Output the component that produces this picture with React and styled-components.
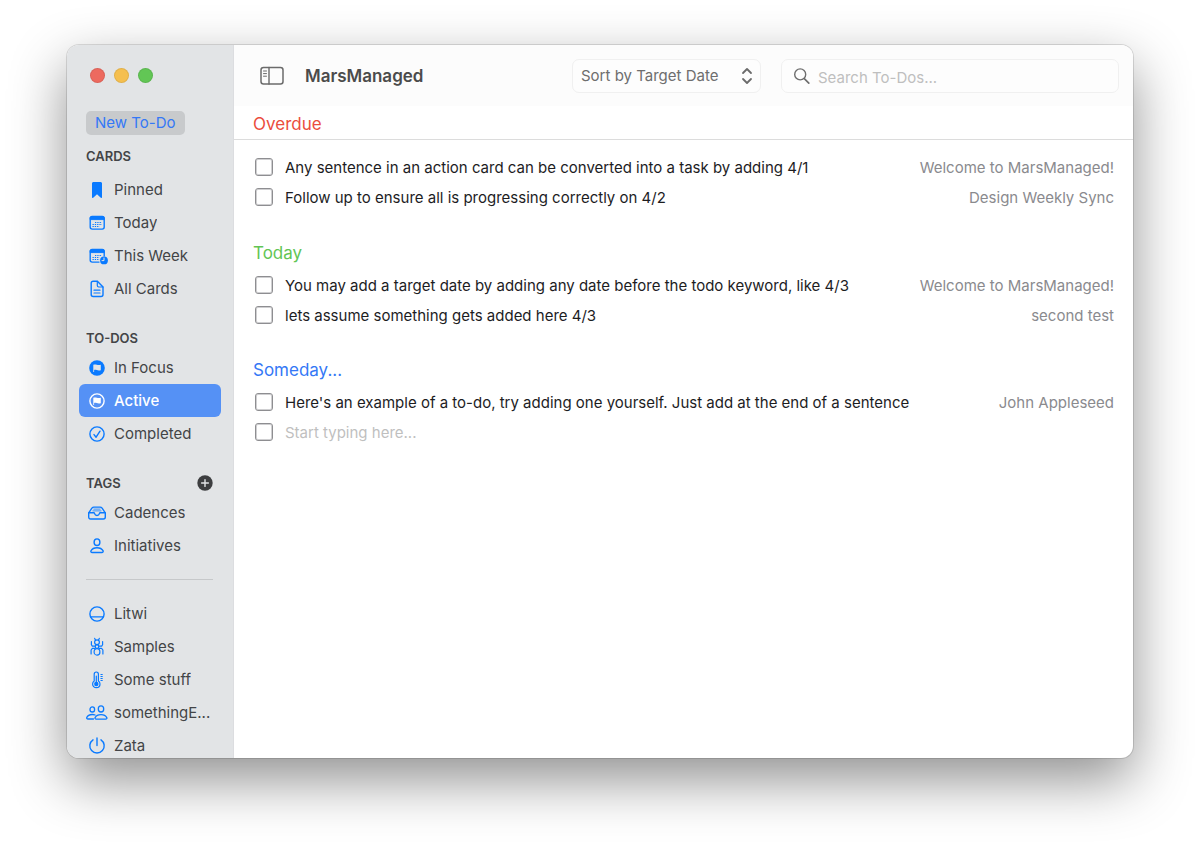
import React, { useState } from 'react';
import styled, { createGlobalStyle, css } from 'styled-components';

const GlobalStyle = createGlobalStyle`
  * {
    box-sizing: border-box;
  }
  body {
    margin: 0;
    background: #fff;
    font-family: Inter, 'Liberation Sans', sans-serif;
    font-size: 15px;
    color: #1d1d1f;
  }
  button, input, select {
    font: inherit;
    color: inherit;
  }
  ul {
    list-style: none;
    margin: 0;
    padding: 0;
  }
`;

const Desktop = styled.div`
  height: 100vh;
  padding: 45px 67px 88px;
  overflow: hidden;
`;

const Window = styled.div`
  display: grid;
  grid-template-columns: 167px 1fr;
  height: 100%;
  overflow: hidden;
  border-radius: 12px;
  background: #fff;
  box-shadow: 0 0 0 1px rgba(0, 0, 0, 0.12), 0 22px 56px rgba(0, 0, 0, 0.44);
`;

const Sidebar = styled.aside`
  padding: 23px 12px 0;
  overflow: hidden;
  background: #e2e4e6;
  border-right: 1px solid #dcdde0;
`;

const TrafficLights = styled.div`
  display: flex;
  gap: 9px;
  padding-left: 11px;
`;

const Light = styled.button`
  width: 15px;
  height: 15px;
  padding: 0;
  border: 1px solid rgba(0, 0, 0, 0.08);
  border-radius: 50%;
  background: ${({ $color }) => $color};
`;

const NewButton = styled.button`
  display: block;
  height: 24px;
  margin: 28px 0 11px 7px;
  padding: 0 9px;
  border: 0;
  border-radius: 5px;
  background: #c8cacc;
  color: #3478f6;
  line-height: 24px;
`;

const SectionHeader = styled.div`
  display: flex;
  align-items: center;
  justify-content: space-between;
  height: 20px;
  margin-bottom: ${({ $loose }) => ($loose ? '7px' : '3px')};
  padding: 0 8px 0 7px;
`;

const SectionTitle = styled.h2`
  margin: 0;
  font-size: 13px;
  font-weight: 600;
  color: #434447;
`;

const AddButton = styled.button`
  display: flex;
  padding: 0;
  border: 0;
  background: none;
`;

const NavList = styled.ul`
  margin-bottom: 23px;
`;

const NavItem = styled.button`
  display: flex;
  align-items: center;
  gap: 6px;
  width: 100%;
  height: 33px;
  padding: 0 8px 0 7px;
  border: 0;
  border-radius: 6px;
  background: none;
  color: #434447;
  text-align: left;

  svg {
    flex: none;
    color: #0a7aff;
  }

  ${({ $active }) =>
    $active &&
    css`
      background: #5591f5;
      color: #fff;
      font-weight: 500;

      svg {
        color: #fff;
      }
    `}
`;

const NavLabel = styled.span`
  overflow: hidden;
  white-space: nowrap;
  text-overflow: ellipsis;
`;

const Divider = styled.hr`
  height: 1px;
  margin: -6px 8px 17px 7px;
  border: 0;
  background: #c6c8ca;
`;

const Main = styled.main`
  display: flex;
  flex-direction: column;
  min-width: 0;
`;

const Toolbar = styled.header`
  display: flex;
  align-items: center;
  gap: 20px;
  height: 61px;
  padding: 0 14px 0 26px;
  background: #fcfcfc;
`;

const ToggleButton = styled.button`
  display: flex;
  padding: 0;
  border: 0;
  background: none;
  color: #6b6b6b;
`;

const AppTitle = styled.h1`
  flex: 1;
  margin: 0;
  font-size: 17px;
  font-weight: 600;
  color: #4b4b4b;
`;

const SortBox = styled.label`
  display: grid;
  align-items: center;
  width: 189px;

  > * {
    grid-area: 1 / 1;
  }
  svg {
    justify-self: end;
    margin-right: 8px;
    pointer-events: none;
  }
`;

const SortSelect = styled.select`
  width: 100%;
  height: 34px;
  padding: 0 30px 0 8px;
  appearance: none;
  border: 1px solid #f0f0f0;
  border-radius: 7px;
  background: #fdfdfd;
  color: #6e6e6e;
`;

const SearchBox = styled.label`
  display: flex;
  align-items: center;
  gap: 8px;
  width: 338px;
  height: 34px;
  padding: 3px 11px 0;
  border: 1px solid #f0f0f0;
  border-radius: 7px;
  background: #fdfdfd;
`;

const PlainInput = styled.input`
  flex: 1;
  min-width: 0;
  padding: 0;
  border: 0;
  outline: 0;
  background: none;

  &::placeholder {
    color: #bfbfbf;
    opacity: 1;
  }
`;

const GroupTitle = styled.h2`
  margin: 0;
  padding: 0 19px;
  font-size: 17px;
  font-weight: 400;
  line-height: 24px;
  color: ${({ $color }) => $color};
`;

const PinnedHeader = styled.div`
  height: 34px;
  padding-top: 6px;
  border-bottom: 1px solid #dcdcdc;
`;

const TodoList = styled.ul`
  margin: ${({ $first }) => ($first ? '12px 0 29px' : '5px 0 28px')};
`;

const TodoRow = styled.li`
  display: flex;
  align-items: center;
  gap: 12px;
  height: 30px;
  padding: 0 19px 0 21px;
`;

const TodoText = styled.label`
  flex: 1;
  min-width: 0;
  overflow: hidden;
  white-space: nowrap;
  text-overflow: ellipsis;
`;

const Source = styled.span`
  color: #8a8a8e;
`;

const Checkbox = styled.input.attrs({ type: 'checkbox' })`
  flex: none;
  width: 18px;
  height: 18px;
  margin: 0;
  appearance: none;
  border: 1px solid #8e8e91;
  border-radius: 3px;
  box-shadow: inset 0 0 0 1px #cfcfd1;

  &:checked {
    background: #3478f6;
  }
`;

const Icon = ({ children, width = 22, height = 22 }) => (
  <svg
    width={width}
    height={height}
    viewBox={`0 0 ${width} ${height}`}
    fill="none"
    stroke="currentColor"
    strokeWidth="1.4"
    strokeLinecap="round"
    strokeLinejoin="round"
    aria-hidden="true"
  >
    {children}
  </svg>
);

const icons = {
  pinned: (
    <path
      d="M6 4.6C6 3.7 6.6 3 7.6 3h6.8c1 0 1.6.7 1.6 1.6v13.6c0 .8-.6 1-1.2.5L11 15.2l-3.8 3.5c-.6.5-1.2.3-1.2-.5z"
      fill="currentColor"
      stroke="none"
    />
  ),
  today: (
    <>
      <rect x="4.2" y="4.5" width="14" height="12.6" rx="2" />
      <path d="M4.2 7.2v-1c0-1 .7-1.7 1.7-1.7h10.6c1 0 1.7.7 1.7 1.7v1z" fill="currentColor" strokeWidth="1" />
      <path d="M9 10.5h7M6.5 12.5h9.5M6.5 14.5h7" strokeWidth="1" strokeLinecap="butt" strokeDasharray="1.3 1" />
    </>
  ),
  week: (
    <>
      <path d="M13 17.1H6.2c-1.3 0-2-.7-2-2V6.5c0-1.3.7-2 2-2h10c1.3 0 2 .7 2 2v4.6" />
      <path d="M4.2 7.2v-1c0-1 .7-1.7 1.7-1.7h10.6c1 0 1.7.7 1.7 1.7v1z" fill="currentColor" strokeWidth="1" />
      <path d="M9 10.5h7M6.5 12.5h7M6.500 14.500h7" strokeWidth="1" strokeLinecap="butt" strokeDasharray="1.3 1" />
      <circle cx="18" cy="15.4" r="3.9" fill="currentColor" stroke="none" />
      <path d="M18 13v2.6h-2" stroke="#e2e4e6" strokeWidth="1" />
    </>
  ),
  document: (
    <>
      <path d="M5.2 5.2c0-1.3.7-2 2-2h4.2l5.6 5.7v7.6c0 1.3-.7 2-2 2H7.2c-1.3 0-2-.7-2-2z" />
      <path d="M11.3 3.4v4.2c0 .9.5 1.4 1.4 1.4H17M8 12.2h6M8 15h6" strokeWidth="1.2" />
    </>
  ),
  focus: (
    <>
      <circle cx="11" cy="11" r="7.8" fill="currentColor" stroke="none" />
      <path d="M7.3 15V7.8c2.4-1.2 4 .9 7.5 0v5.4c-3.5.9-5-1-6.7-.1V15z" fill="#e2e4e6" stroke="none" />
    </>
  ),
  active: (
    <>
      <circle cx="11" cy="11" r="7.1" />
      <path d="M7.3 15V7.8c2.4-1.2 4 .9 7.5 0v5.4c-3.5.9-5-1-6.7-.1V15z" fill="currentColor" stroke="none" />
    </>
  ),
  completed: (
    <>
      <circle cx="11" cy="11" r="7.1" />
      <path d="M8 11.6l2.1 2.6 3.9-6" />
    </>
  ),
  tray: (
    <>
      <path d="M2.7 10.8L5.9 6.2c.6-.8 1.1-1.1 2-1.1h6.2c.9 0 1.4.3 2 1.1l3.2 4.6v4.3c0 1.2-.7 1.9-1.9 1.9H4.6c-1.2 0-1.9-.7-1.9-1.9z" />
      <path d="M2.9 10.7h4.7c.6 0 .9.4 1 .9.3 1.1 1.2 1.9 2.4 1.9s2.1-.8 2.4-1.9c.1-.5.4-.9 1-.9h4.7" />
      <path d="M7.8 7.1h6.4M6.9 8.9h8.2" strokeWidth="0.8" />
    </>
  ),
  person: (
    <>
      <ellipse cx="11" cy="7.2" rx="2.9" ry="3.3" />
      <path d="M6.2 17.5c-1.2 0-1.7-.8-1.2-1.8 1-1.9 3.2-3 6-3s5 1.1 6 3c.5 1 0 1.8-1.2 1.8z" />
    </>
  ),
  horizon: (
    <>
      <circle cx="11" cy="11" r="7.1" />
      <path d="M4.8 13.9h12.4" />
    </>
  ),
  ant: (
    <g strokeWidth="1.2">
      <circle cx="11" cy="6.3" r="2.4" />
      <circle cx="11" cy="10.6" r="1.8" />
      <ellipse cx="11" cy="15.9" rx="2.9" ry="3.2" />
      <path d="M9.6 4.3L8.7 2.4M12.4 4.3l.9-1.9M9.2 10.1H6.3L5.4 8.700V5.600M12.800 10.100h2.900l.9-1.400V5.600M9 12.300H6.400L5.100 14v4M13 12.300h2.600l1.300 1.700v4" />
    </g>
  ),
  thermometer: (
    <>
      <path
        d="M8.2 12V5.2c0-1.3.9-2.2 2.1-2.2s2.1.9 2.1 2.2V12c1 .7 1.6 1.8 1.6 3 0 2.1-1.6 3.7-3.7 3.700S6.600 17.100 6.600 15c0-1.200.6-2.300 1.600-3z"
        strokeWidth="1.2"
      />
      <circle cx="10.3" cy="15" r="2.2" fill="currentColor" stroke="none" />
      <path d="M10.3 7v8" strokeWidth="1.2" />
      <path d="M14.5 5.5h2.2M14.5 7.5h2.2M14.5 9.5h2.2M14.5 11.5h2.2" strokeWidth="1" strokeLinecap="butt" />
    </>
  ),
  people: (
    <g strokeWidth="1.3">
      <ellipse cx="6.3" cy="7.4" rx="2.3" ry="2.6" />
      <ellipse cx="15" cy="6.9" rx="2.7" ry="3.1" />
      <path d="M7.5 17H2c-1 0-1.500-.6-1.200-1.400.7-2 2.800-3.100 5.500-3.100 1.100 0 2 .2 2.800.5" />
      <path d="M10.3 17.2c-1.100 0-1.600-.7-1.200-1.600.9-1.900 3-3 5.900-3 2.800 0 4.900 1.100 5.800 3 .4.9-.1 1.600-1.200 1.600z" />
    </g>
  ),
  power: <path d="M11 3v7.5M7 4.8a7.2 7.2 0 1 0 8 0" />,
};

const cardItems = [
  { label: 'Pinned', icon: 'pinned' },
  { label: 'Today', icon: 'today' },
  { label: 'This Week', icon: 'week' },
  { label: 'All Cards', icon: 'document' },
];

const todoItems = [
  { label: 'In Focus', icon: 'focus' },
  { label: 'Active', icon: 'active' },
  { label: 'Completed', icon: 'completed' },
];

const tagItems = [
  { label: 'Cadences', icon: 'tray' },
  { label: 'Initiatives', icon: 'person' },
];

const otherTags = [
  { label: 'Litwi', icon: 'horizon' },
  { label: 'Samples', icon: 'ant' },
  { label: 'Some stuff', icon: 'thermometer' },
  { label: 'somethingE...', icon: 'people' },
  { label: 'Zata', icon: 'power' },
];

const overdue = [
  {
    id: 'o1',
    text: 'Any sentence in an action card can be converted into a task by adding 4/1',
    source: 'Welcome to MarsManaged!',
  },
  { id: 'o2', text: 'Follow up to ensure all is progressing correctly on 4/2', source: 'Design Weekly Sync' },
];

const today = [
  {
    id: 't1',
    text: 'You may add a target date by adding any date before the todo keyword, like 4/3',
    source: 'Welcome to MarsManaged!',
  },
  { id: 't2', text: 'lets assume something gets added here 4/3', source: 'second test' },
];

const someday = [
  {
    id: 's1',
    text: "Here's an example of a to-do, try adding one yourself. Just add at the end of a sentence",
    source: 'John Appleseed',
  },
];

const Nav = ({ items, selected, onSelect }) => (
  <NavList>
    {items.map(({ label, icon }) => (
      <li key={label}>
        <NavItem type="button" $active={label === selected} onClick={() => onSelect(label)}>
          <Icon>{icons[icon]}</Icon>
          <NavLabel>{label}</NavLabel>
        </NavItem>
      </li>
    ))}
  </NavList>
);

const Todo = ({ id, text, source }) => (
  <TodoRow>
    <Checkbox id={id} />
    <TodoText htmlFor={id}>{text}</TodoText>
    <Source>{source}</Source>
  </TodoRow>
);

const App = () => {
  const [selected, setSelected] = useState('Active');

  return (
    <Desktop>
      <GlobalStyle />
      <Window>
        <Sidebar>
          <TrafficLights>
            <Light type="button" aria-label="Close" $color="#ed6a5f" />
            <Light type="button" aria-label="Minimize" $color="#f5bf4f" />
            <Light type="button" aria-label="Zoom" $color="#62c655" />
          </TrafficLights>
          <NewButton type="button">New To-Do</NewButton>
          <SectionHeader $loose>
            <SectionTitle>CARDS</SectionTitle>
          </SectionHeader>
          <Nav items={cardItems} selected={selected} onSelect={setSelected} />
          <SectionHeader>
            <SectionTitle>TO-DOS</SectionTitle>
          </SectionHeader>
          <Nav items={todoItems} selected={selected} onSelect={setSelected} />
          <SectionHeader>
            <SectionTitle>TAGS</SectionTitle>
            <AddButton type="button" aria-label="Add tag">
              <Icon width={16} height={16}>
                <circle cx="8" cy="8" r="7.7" fill="#3d3e40" stroke="none" />
                <path d="M8 4.6v6.8M4.6 8h6.8" stroke="#e2e4e6" />
              </Icon>
            </AddButton>
          </SectionHeader>
          <Nav items={tagItems} selected={selected} onSelect={setSelected} />
          <Divider />
          <Nav items={otherTags} selected={selected} onSelect={setSelected} />
        </Sidebar>
        <Main>
          <Toolbar>
            <ToggleButton type="button" aria-label="Toggle sidebar">
              <Icon width={25} height={20}>
                <rect x="1" y="1.5" width="22" height="16.5" rx="2.5" strokeWidth="1.5" />
                <path d="M9 1.5V18" />
                <path d="M3.5 5h3M3.5 7.6h3M3.5 10.2h3" strokeWidth="1" />
              </Icon>
            </ToggleButton>
            <AppTitle>MarsManaged</AppTitle>
            <SortBox>
              <SortSelect aria-label="Sort order" defaultValue="target">
                <option value="target">Sort by Target Date</option>
                <option value="created">Sort by Created Date</option>
              </SortSelect>
              <Icon width={12} height={20}>
                <path d="M2 7l4-4 4 4M2 13l4 4 4-4" stroke="#6b6b6b" strokeWidth="1.8" />
              </Icon>
            </SortBox>
            <SearchBox>
              <Icon width={17} height={18}>
                <circle cx="7.2" cy="6.4" r="5.5" stroke="#6e6e6e" />
                <path d="M11.3 10.6l4.5 4.5" stroke="#6e6e6e" strokeWidth="1.7" />
              </Icon>
              <PlainInput type="search" aria-label="Search" placeholder="Search To-Dos..." />
            </SearchBox>
          </Toolbar>
          <PinnedHeader>
            <GroupTitle $color="#eb4d3d">Overdue</GroupTitle>
          </PinnedHeader>
          <TodoList $first>
            {overdue.map((todo) => (
              <Todo key={todo.id} {...todo} />
            ))}
          </TodoList>
          <GroupTitle $color="#62c554">Today</GroupTitle>
          <TodoList>
            {today.map((todo) => (
              <Todo key={todo.id} {...todo} />
            ))}
          </TodoList>
          <GroupTitle $color="#3478f6">Someday...</GroupTitle>
          <TodoList>
            {someday.map((todo) => (
              <Todo key={todo.id} {...todo} />
            ))}
            <TodoRow>
              <Checkbox aria-label="New to-do done" />
              <PlainInput type="text" aria-label="New to-do" placeholder="Start typing here..." />
            </TodoRow>
          </TodoList>
        </Main>
      </Window>
    </Desktop>
  );
};

export default App;
